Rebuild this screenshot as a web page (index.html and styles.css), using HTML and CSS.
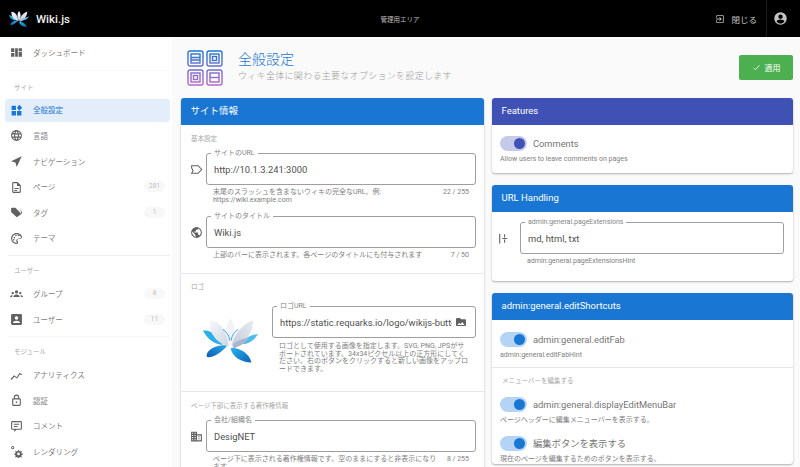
FILE: index.html
```html
<!DOCTYPE html>
<html lang="ja">
<head>
<meta charset="utf-8">
<title>全般設定 - Wiki.js</title>
<link rel="stylesheet" href="styles.css">
</head>
<body>
<svg class="defs" width="0" height="0" aria-hidden="true">
  <defs>
    <linearGradient id="lb" x1="0" y1="0" x2="1" y2="1"><stop offset="0" stop-color="#25b4ee"/><stop offset="1" stop-color="#0b62b8"/></linearGradient>
    <linearGradient id="lb2" x1="1" y1="0" x2="0" y2="1"><stop offset="0" stop-color="#29a9e8"/><stop offset="1" stop-color="#0d5fb3"/></linearGradient>
    <linearGradient id="pw" x1="0" y1="0" x2="1" y2="1"><stop offset="0" stop-color="#f6f7fa"/><stop offset="1" stop-color="#cfd6e2"/></linearGradient>
    <linearGradient id="pw2" x1="1" y1="0" x2="0" y2="1"><stop offset="0" stop-color="#e9ecf1"/><stop offset="1" stop-color="#c3ccdc"/></linearGradient>
    <linearGradient id="hg" gradientUnits="userSpaceOnUse" x1="0" y1="0" x2="0" y2="36"><stop offset="0" stop-color="#1976d2"/><stop offset="1" stop-color="#ba68c8"/></linearGradient>
    <symbol id="lotus" viewBox="0 0 100 80">
      <path fill="#29b0ea" d="M0 22C14 20 28 32 36 48C22 48 8 38 0 22Z"/>
      <path fill="#4bbcec" d="M100 28C88 30 74 36 66 46C80 48 92 42 100 28Z"/>
      <path fill="url(#lb2)" d="M44 49C34 62 18 72 7 70C4 58 24 47 44 49Z"/>
      <path fill="url(#lb)" d="M50 54C64 52 84 62 88 80C70 80 54 70 50 54Z"/>
      <path fill="url(#pw)" d="M12 4C28 2 44 22 47 50C30 48 10 30 12 4Z"/>
      <path fill="url(#pw2)" d="M91 3C76 8 58 24 52 48C70 50 92 30 91 3Z"/>
      <path fill="#a9b5cf" d="M54 48C64 38 76 36 84 34C78 44 66 52 54 54Z"/>
      <path fill="#f1f3f7" d="M50 0C60 12 61 32 50 50C40 32 40 12 50 0Z"/>
      <path fill="none" stroke="#3fa3e0" stroke-width="1.800" d="M36 20C43 24 47 30 49 40M64 20C57 24 53 30 51 40"/>
    </symbol>
    <symbol id="i-dash" viewBox="0 0 24 24"><path d="M2 4h6v7H2zM2 13h6v7H2zM9.500 4h5v16h-5zM16 4h6v5h-6zM16 10.500h6V20h-6z"/></symbol>
    <symbol id="i-grid" viewBox="0 0 24 24"><path d="M3 3h8v8H3zM13 13h8v8h-8zM3 13h8v8H3zM17 1.500L22.500 7 17 12.500 13 7z"/></symbol>
    <symbol id="i-web" viewBox="0 0 24 24"><path d="M16.360 14C16.440 13.340 16.500 12.680 16.500 12C16.500 11.320 16.440 10.660 16.360 10H19.740C19.900 10.640 20 11.310 20 12C20 12.690 19.900 13.360 19.740 14M14.590 19.560C15.190 18.450 15.650 17.250 15.970 16H18.920C17.960 17.650 16.430 18.930 14.590 19.560M14.340 14H9.660C9.560 13.340 9.500 12.680 9.500 12C9.500 11.320 9.560 10.650 9.660 10H14.340C14.430 10.650 14.500 11.320 14.500 12C14.500 12.680 14.430 13.340 14.340 14M12 19.960C11.170 18.760 10.500 17.430 10.090 16H13.910C13.500 17.430 12.830 18.760 12 19.960M8 8H5.080C6.030 6.340 7.570 5.060 9.400 4.440C8.800 5.550 8.350 6.750 8 8M5.080 16H8C8.350 17.250 8.800 18.450 9.400 19.560C7.570 18.930 6.030 17.650 5.080 16M4.260 14C4.100 13.360 4 12.690 4 12C4 11.310 4.100 10.640 4.260 10H7.640C7.560 10.660 7.500 11.320 7.500 12C7.500 12.680 7.560 13.340 7.640 14M12 4.030C12.830 5.230 13.500 6.570 13.910 8H10.090C10.500 6.570 11.170 5.230 12 4.030M18.920 8H15.970C15.650 6.750 15.190 5.550 14.590 4.440C16.430 5.070 17.960 6.340 18.920 8M12 2C6.470 2 2 6.500 2 12A10 10 0 0 0 12 22A10 10 0 0 0 22 12A10 10 0 0 0 12 2Z"/></symbol>
    <symbol id="i-nav" viewBox="0 0 24 24"><path d="M21.500 2.500L2 11.500 10 14 12.500 22z"/></symbol>
    <symbol id="i-page" viewBox="0 0 24 24"><path d="M14 2H6a2 2 0 0 0-2 2v16a2 2 0 0 0 2 2h12a2 2 0 0 0 2-2V8zM18 20H6V4h7v5h5zM8 13h8v1.800H8zM8 16.500h5v1.800H8z"/></symbol>
    <symbol id="i-tag" viewBox="0 0 24 24"><path d="M2 5a2 2 0 0 1 2-2h6l9 9.500a1.800 1.800 0 0 1 0 2.500l-5 5a1.800 1.800 0 0 1-2.500 0L2 11zM19 4.500l3.500 8.500-6 6 1-2 3-4z"/></symbol>
    <symbol id="i-palette" viewBox="0 0 24 24"><path d="M12 2C6.500 2 2 6.500 2 12s4.500 10 10 10c1.700 0 3-1.300 3-2.800 0-.7-.3-1.400-.8-1.900-.4-.5-.7-1-.7-1.700 0-1.400 1.100-2.500 2.500-2.500H18c2.200 0 4-1.800 4-4C22 5.600 17.500 2 12 2zM12 20c-4.400 0-8-3.600-8-8s3.600-8 8-8 8 3 8 6.100c0 1.100-.9 1.900-2 1.900h-2c-2.500 0-4.500 2-4.500 4.500 0 1.100.4 2.100 1.100 2.900.3.300.4.500.4.700 0 .4-.4.800-1 .8zM6.500 10.500a1.500 1.500 0 1 0 3 0 1.500 1.500 0 1 0-3 0zM9.500 6.500a1.500 1.500 0 1 0 3 0 1.500 1.500 0 1 0-3 0zM14.500 6.500a1.500 1.500 0 1 0 3 0 1.500 1.500 0 1 0-3 0zM5.500 14.500a1.500 1.500 0 1 0 3 0 1.500 1.500 0 1 0-3 0z"/></symbol>
    <symbol id="i-group" viewBox="0 0 24 24"><path d="M12 6a3 3 0 1 1 0 6 3 3 0 0 1 0-6zM5 9a2.200 2.200 0 1 1 0 4.400A2.200 2.200 0 0 1 5 9zM19 9a2.200 2.200 0 1 1 0 4.400A2.200 2.200 0 0 1 19 9zM6 18.500c0-2.500 3-4.500 6-4.500s6 2 6 4.500zM0 18.500c0-2 2-3.500 4.800-3.800-.8.900-1 2.400-1 3.800zM24 18.500c0-2-2-3.500-4.800-3.800.8.900 1 2.400 1 3.800z"/></symbol>
    <symbol id="i-user" viewBox="0 0 24 24"><path fill-rule="evenodd" d="M4 2h16a2 2 0 0 1 2 2v16a2 2 0 0 1-2 2H4a2 2 0 0 1-2-2V4a2 2 0 0 1 2-2zM12 6a3.300 3.300 0 1 0 0 6.600A3.300 3.300 0 0 0 12 6zM5.500 18.500h13c0-2.700-3.500-4.200-6.500-4.200s-6.500 1.500-6.500 4.200z"/></symbol>
    <symbol id="i-chart" viewBox="0 0 24 24"><path d="M1 18.500l6.500-7 5 3.500 5-8 5 3-1 1.700-3.300-2-5 8-5.200-3.600-5.500 6z"/></symbol>
    <symbol id="i-lock" viewBox="0 0 24 24"><path d="M18 8h-1V6a5 5 0 0 0-10 0v2H6a2 2 0 0 0-2 2v10a2 2 0 0 0 2 2h12a2 2 0 0 0 2-2V10a2 2 0 0 0-2-2zM9 6a3 3 0 0 1 6 0v2H9zM18 20H6V10h12zM12 13.500a1.500 1.500 0 1 0 0 3 1.500 1.500 0 0 0 0-3z"/></symbol>
    <symbol id="i-comment" viewBox="0 0 24 24"><path d="M4 2h16a2 2 0 0 1 2 2v12a2 2 0 0 1-2 2h-8l-4 4v-4H4a2 2 0 0 1-2-2V4a2 2 0 0 1 2-2zM4 4v12h16V4zM7 7h10v1.700H7zM7 11h7v1.700H7z"/></symbol>
    <symbol id="i-gears" viewBox="0 0 24 24"><path d="M5 2a3 3 0 1 1 0 6 3 3 0 0 1 0-6zM5 3.500a1.500 1.500 0 1 0 0 3 1.500 1.500 0 0 0 0-3zM15 9l1.500 0 .5 2 2 .8 1.800-1 1.100 1.100-1 1.800.8 2 2 .5 0 1.600-2 .5-.8 2 1 1.800-1.100 1.100-1.800-1-2 .8-.5 2h-1.600l-.5-2-2-.8-1.800 1-1.100-1.100 1-1.800-.8-2-2-.5v-1.600l2-.5.8-2-1-1.800 1.100-1.100 1.800 1 2-.8zM15.700 14a2.500 2.500 0 1 0 0 5 2.500 2.500 0 0 0 0-5z"/></symbol>
    <symbol id="i-exit" viewBox="0 0 24 24"><path d="M5 3h14a2 2 0 0 1 2 2v14a2 2 0 0 1-2 2H5a2 2 0 0 1-2-2v-4h2v4h14V5H5v4H3V5a2 2 0 0 1 2-2zM10.100 15.600L12.700 13H3v-2h9.700l-2.600-2.600L11.500 7l5 5-5 5z"/></symbol>
    <symbol id="i-account" viewBox="0 0 24 24"><path d="M12 2a10 10 0 1 0 0 20 10 10 0 0 0 0-20zM12 5.500a3.500 3.500 0 1 1 0 7 3.500 3.500 0 0 1 0-7zM12 20c-2.600 0-4.900-1.300-6.300-3.300C5.800 14.700 9.800 13.600 12 13.600s6.200 1.100 6.300 3.100C16.900 18.700 14.600 20 12 20z"/></symbol>
    <symbol id="i-label" viewBox="0 0 24 24"><path d="M3 5h12l6.500 7-6.500 7H3l1-1.800 1.500-3.200-1-2-1.500-3z" fill="none" stroke="currentColor" stroke-width="2"/></symbol>
    <symbol id="i-earth" viewBox="0 0 24 24"><path d="M12 2a10 10 0 1 0 0 20 10 10 0 0 0 0-20zM11 19.900C7 19.400 4 16 4 12c0-.6.100-1.200.2-1.800L9 15v1a2 2 0 0 0 2 2zM17.900 17.400c-.3-.8-1-1.400-1.900-1.400h-1v-3a1 1 0 0 0-1-1H8v-2h2a1 1 0 0 0 1-1V7h2a2 2 0 0 0 2-2v-.4c2.900 1.200 5 4.100 5 7.400 0 2.100-.8 4-2.100 5.400z"/></symbol>
    <symbol id="i-folder" viewBox="0 0 24 24"><path d="M4 4h6l2 2.500h8a2 2 0 0 1 2 2V18a2 2 0 0 1-2 2H4a2 2 0 0 1-2-2V6a2 2 0 0 1 2-2zM5 18h14l-4.500-6-3.500 4.500-2.500-3z" fill-rule="evenodd"/></symbol>
    <symbol id="i-building" viewBox="0 0 24 24"><path d="M2 3h11v5h9v13H2zM4 5v2h2V5zM8.500 5v2h2V5zM4 9v2h2V9zM8.500 9v2h2V9zM4 13v2h2v-2zM8.500 13v2h2v-2zM4 17v2h2v-2zM8.500 17v2h2v-2zM13 10v9h7v-9zM15 12h3v1.500h-3zM15 15.500h3V17h-3z" fill-rule="evenodd"/></symbol>
    <symbol id="i-ext" viewBox="0 0 24 24"><path d="M4 3h2v18H4zM13 4h2v6h-2zM10 11.200h9v1.600h-9zM13 14h2v6h-2z"/></symbol>
  </defs>
</svg>

<header class="topbar">
  <div class="brand">
    <svg class="brand-logo"><use href="#lotus"/></svg>
    <span class="brand-name">Wiki.js</span>
  </div>
  <div class="topbar-title">管理用エリア</div>
  <div class="topbar-actions">
    <svg class="exit-icon"><use href="#i-exit"/></svg>
    <span class="close-text">閉じる</span>
    <span class="topbar-sep"></span>
    <svg class="account-icon"><use href="#i-account"/></svg>
  </div>
</header>

<div class="shell">
  <nav class="sidebar">
    <a class="nav-item"><svg class="nav-icon"><use href="#i-dash"/></svg><span>ダッシュボード</span></a>
    <div class="nav-divider nav-divider-first"></div>
    <div class="nav-head">サイト</div>
    <a class="nav-item is-active"><svg class="nav-icon"><use href="#i-grid"/></svg><span>全般設定</span></a>
    <a class="nav-item"><svg class="nav-icon"><use href="#i-web"/></svg><span>言語</span></a>
    <a class="nav-item"><svg class="nav-icon"><use href="#i-nav"/></svg><span>ナビゲーション</span></a>
    <a class="nav-item"><svg class="nav-icon"><use href="#i-page"/></svg><span>ページ</span><b class="chip">281</b></a>
    <a class="nav-item"><svg class="nav-icon"><use href="#i-tag"/></svg><span>タグ</span><b class="chip">1</b></a>
    <a class="nav-item"><svg class="nav-icon"><use href="#i-palette"/></svg><span>テーマ</span></a>
    <div class="nav-divider"></div>
    <div class="nav-head">ユーザー</div>
    <a class="nav-item"><svg class="nav-icon"><use href="#i-group"/></svg><span>グループ</span><b class="chip">8</b></a>
    <a class="nav-item"><svg class="nav-icon"><use href="#i-user"/></svg><span>ユーザー</span><b class="chip">11</b></a>
    <div class="nav-divider nav-divider-faint"></div>
    <div class="nav-head">モジュール</div>
    <a class="nav-item"><svg class="nav-icon"><use href="#i-chart"/></svg><span>アナリティクス</span></a>
    <a class="nav-item"><svg class="nav-icon"><use href="#i-lock"/></svg><span>認証</span></a>
    <a class="nav-item"><svg class="nav-icon"><use href="#i-comment"/></svg><span>コメント</span></a>
    <a class="nav-item"><svg class="nav-icon"><use href="#i-gears"/></svg><span>レンダリング</span></a>
  </nav>

  <main class="content">
    <div class="page-head">
      <svg class="page-icon" viewBox="0 0 36 36">
        <rect x="1" y="1" width="15" height="15" rx="2"/><rect x="4" y="4" width="9" height="9"/><path d="M4 7.500h9M4 10h9"/>
        <rect x="20" y="1" width="15" height="15" rx="2"/><rect x="23" y="4" width="9" height="9"/><rect x="25.500" y="6.500" width="4" height="4"/>
        <rect x="1" y="20" width="15" height="15" rx="2"/><rect x="4" y="23" width="9" height="9"/><rect x="6.500" y="25.500" width="4" height="4"/>
        <rect x="20" y="20" width="15" height="15" rx="2"/><rect x="23" y="23" width="9" height="9"/><path d="M23 27.500h9"/>
      </svg>
      <div class="page-titles">
        <h1>全般設定</h1>
        <p>ウィキ全体に関わる主要なオプションを設定します</p>
      </div>
      <button class="apply"><svg class="apply-check" viewBox="0 0 24 24"><path d="M4 13l5 5L20 6" fill="none" stroke="#fff" stroke-width="2"/></svg>適用</button>
    </div>

    <div class="columns">
      <section class="card card-left">
        <h2 class="card-title">サイト情報</h2>
        <div class="block block-basic">
          <div class="subhead">基本設定</div>
          <div class="field-row">
            <svg class="field-icon"><use href="#i-label"/></svg>
            <div class="field">
              <div class="box"><span class="box-label">サイトのURL</span><span class="box-value">http://10.1.3.241:3000</span></div>
              <div class="hint-row"><span class="hint hint-url">末尾のスラッシュを含まないウィキの完全なURL。例: https://wiki.example.com</span><span class="count">22 / 255</span></div>
            </div>
          </div>
          <div class="field-row">
            <svg class="field-icon"><use href="#i-earth"/></svg>
            <div class="field">
              <div class="box"><span class="box-label">サイトのタイトル</span><span class="box-value">Wiki.js</span></div>
              <div class="hint-row"><span class="hint">上部のバーに表示されます。各ページのタイトルにも付与されます</span><span class="count">7 / 50</span></div>
            </div>
          </div>
        </div>
        <div class="block block-logo">
          <div class="subhead">ロゴ</div>
          <div class="logo-row">
            <svg class="logo-big"><use href="#lotus"/></svg>
            <div class="field logo-field">
              <div class="box"><span class="box-label">ロゴURL</span><span class="box-value box-value-clip">https://static.requarks.io/logo/wikijs-butterfly.svg</span><svg class="folder"><use href="#i-folder"/></svg></div>
              <div class="hint-row"><span class="hint hint-logo">ロゴとして使用する画像を指定します。SVG, PNG, JPSがサポートされています。34x34ピクセル以上の正方形にしてください。右のボタンをクリックすると新しい画像をアップロードできます。</span></div>
            </div>
          </div>
        </div>
        <div class="block block-company">
          <div class="subhead">ページ下部に表示する著作権情報</div>
          <div class="field-row">
            <svg class="field-icon"><use href="#i-building"/></svg>
            <div class="field">
              <div class="box"><span class="box-label">会社/組織名</span><span class="box-value">DesigNET</span></div>
              <div class="hint-row"><span class="hint hint-company">ページ下に表示される著作権情報です。空のままにすると非表示になります。</span><span class="count">8 / 255</span></div>
            </div>
          </div>
        </div>
      </section>

      <div class="stack">
        <section class="card card-features">
          <h2 class="card-title card-title-indigo">Features</h2>
          <div class="toggle-block">
            <div class="toggle toggle-indigo"><span class="track"><i class="thumb"></i></span><span class="toggle-label">Comments</span></div>
            <div class="toggle-hint">Allow users to leave comments on pages</div>
          </div>
        </section>
        <section class="card card-url">
          <h2 class="card-title">URL Handling</h2>
          <div class="url-block">
            <div class="field-row">
              <svg class="field-icon field-icon-ext"><use href="#i-ext"/></svg>
              <div class="field">
                <div class="box"><span class="box-label">admin:general.pageExtensions</span><span class="box-value">md, html, txt</span></div>
                <div class="hint-row"><span class="hint">admin:general.pageExtensionsHint</span></div>
              </div>
            </div>
          </div>
        </section>
        <section class="card card-shortcuts">
          <h2 class="card-title">admin:general.editShortcuts</h2>
          <div class="toggle-block toggle-block-line">
            <div class="toggle"><span class="track"><i class="thumb"></i></span><span class="toggle-label">admin:general.editFab</span></div>
            <div class="toggle-hint">admin:general.editFabHint</div>
          </div>
          <div class="toggle-block toggle-block-menu">
            <div class="subhead">メニューバーを編集する</div>
            <div class="toggle"><span class="track"><i class="thumb"></i></span><span class="toggle-label">admin:general.displayEditMenuBar</span></div>
            <div class="toggle-hint">ページヘッダーに編集メニューバーを表示する。</div>
            <div class="toggle toggle-next"><span class="track"><i class="thumb"></i></span><span class="toggle-label">編集ボタンを表示する</span></div>
            <div class="toggle-hint">現在のページを編集するためのボタンを表示する。</div>
          </div>
        </section>
      </div>
    </div>
  </main>
</div>
</body>
</html>
```

FILE: styles.css
```css
* { box-sizing: border-box; }
html, body { margin: 0; height: 100%; overflow: hidden; }
body {
  background: #fafafa;
  color: #616161;
  font-family: Roboto, "Noto Sans CJK JP", sans-serif;
  font-size: 9px;
}
.defs { position: absolute; }
svg { display: block; flex: none; fill: currentColor; }

.topbar {
  height: 37px;
  background: #000;
  color: #e0e0e0;
  display: grid;
  grid-template-columns: 1fr auto 1fr;
  align-items: center;
}
.brand { display: flex; align-items: center; padding-left: 9px; }
.brand-logo { width: 20px; height: 16px; }
.brand-name { margin-left: 7px; font-size: 11.500px; font-weight: 500; color: #eee; }
.topbar-title { font-size: 6.500px; color: #bdbdbd; }
.topbar-actions { display: flex; align-items: center; justify-content: flex-end; height: 37px; }
.exit-icon { width: 10px; height: 10px; color: #bdbdbd; }
.close-text { margin-left: 6px; font-size: 8.500px; color: #c4c4c4; }
.topbar-sep { width: 1px; height: 37px; background: #1c1c1c; margin-left: 9px; }
.account-icon { width: 15px; height: 15px; margin: 0 12px 0 6px; color: #c4c4c4; }

.shell { display: flex; height: 430px; }

.sidebar {
  width: 172px;
  flex: none;
  background: #fff;
  padding: 3.200px 0 0;
}
.nav-item {
  height: 25.600px;
  display: flex;
  align-items: center;
  padding: 0 7px 1px 10px;
  font-size: 7.500px;
  color: #808080;
}
.nav-item span { margin-left: 10px; }
.nav-icon { width: 13px; height: 13px; color: #616161; margin-top: 1px; }
.nav-item.is-active {
  height: 23.600px;
  margin: 1px 2px 1px 5px;
  padding-left: 5px;
  background: #e3eefa;
  border-radius: 3px;
  color: #1976d2;
}
.nav-item.is-active .nav-icon { color: #1976d2; }
.chip {
  margin-left: auto;
  min-width: 21px;
  height: 11px;
  padding: 0 5px;
  border-radius: 6px;
  background: #f8f8f8;
  color: #bdbdbd;
  font-size: 6.500px;
  font-weight: 400;
  line-height: 11px;
  text-align: center;
}
.nav-divider { height: 1px; margin: 4px 2px 5px 8px; background: #eee; }
.nav-divider-first { background: #f8f8f8; margin-bottom: 6.800px; }
.nav-divider-faint { background: #f8f8f8; }
.nav-head {
  height: 20px;
  padding-left: 14px;
  line-height: 20px;
  font-size: 6.500px;
  color: #a8a8a8;
}

.content { flex: 1; min-width: 0; padding: 0 7px 0 9px; }
.page-head { height: 61px; display: flex; align-items: flex-start; padding-top: 13px; }
.page-icon { width: 36px; height: 36px; margin-left: 6px; fill: none; stroke: url(#hg); stroke-width: 1.400; }
.page-titles { margin-left: 15px; flex: 1; }
.page-titles h1 { margin: 0 0 1px; font-size: 14px; line-height: 19px; font-weight: 300; color: #1976d2; }
.page-titles p { margin: 0; font-size: 9px; line-height: 13px; font-weight: 300; color: #9e9e9e; letter-spacing: .3px; }
.apply {
  width: 54px;
  height: 25px;
  margin-top: 5px;
  display: flex;
  align-items: center;
  justify-content: center;
  gap: 4px;
  border: 0;
  border-radius: 2px;
  background: #4caf50;
  color: #fff;
  font: inherit;
  font-size: 8px;
}
.apply-check { width: 9px; height: 9px; }

.columns { display: grid; grid-template-columns: 303px 301px; gap: 8px; align-items: start; }
.stack { display: flex; flex-direction: column; gap: 12px; }

.card {
  background: #fff;
  border-radius: 3px;
  box-shadow: 0 1px 2px rgba(0,0,0,.3);
  overflow: hidden;
}
.card-title {
  margin: 0;
  height: 27px;
  padding-left: 9.500px;
  background: #1976d2;
  color: #fff;
  font-size: 9.500px;
  font-weight: 400;
  line-height: 26px;
}
.card-title-indigo { background: #3f51b5; }

.subhead { font-size: 6.500px; line-height: 9px; color: #a8a8a8; }
.block { padding: 10px 8px 0 10px; border-bottom: 1px solid #e8e8e8; }
.block-basic { height: 149px; }
.block-logo { height: 118px; padding-top: 9px; }
.block-company { border-bottom: 0; }

.field-row { display: flex; align-items: flex-start; }
.field-icon { width: 13px; height: 13px; margin-top: 10px; margin-right: 3px; color: #616161; }
.block .field-row { margin-left: -1px; }
.block .subhead + .field-row { margin-top: 9px; }
.field { flex: 1; min-width: 0; }

.box {
  position: relative;
  height: 32px;
  display: flex;
  align-items: center;
  padding: 0 7px;
  border: 1px solid #9e9e9e;
  border-radius: 3px;
  background: #fff;
}
.box-label {
  position: absolute;
  top: -5px;
  left: 4px;
  padding: 0 3px;
  background: #fff;
  font-size: 7px;
  line-height: 9px;
  color: #858585;
}
.box-value { font-size: 9.400px; color: #505050; white-space: nowrap; }
.box-value-clip { flex: 1; min-width: 0; overflow: hidden; }
.folder { width: 12px; height: 12px; margin-left: 3px; margin-right: 1px; color: #616161; }

.hint-row { display: flex; justify-content: space-between; gap: 8px; padding: 4px 7px 0; min-height: 31px; }
.hint { font-size: 7px; line-height: 7.500px; color: #808080; }
.hint-url { width: 175px; }
.hint-company { width: 225px; }
.hint-logo { width: 190px; padding-top: 1px; }
.count { flex: none; font-size: 7px; line-height: 7.500px; color: #808080; }

.logo-row { display: flex; align-items: flex-start; margin-top: 14px; }
.logo-big { width: 55px; height: 45px; margin: 12px 14px 0 12px; }
.logo-field .hint-row { padding-right: 5px; }

.track {
  position: relative;
  display: block;
  width: 27px;
  height: 15px;
  border-radius: 8px;
  background: #b3d4f5;
}
.thumb {
  position: absolute;
  top: 2px;
  right: 2px;
  width: 11px;
  height: 11px;
  border-radius: 50%;
  background: #1976d2;
}
.toggle { display: flex; align-items: center; gap: 6px; height: 16px; }
.toggle-indigo .track { background: #c5cae9; }
.toggle-indigo .thumb { background: #3f51b5; }
.toggle-label { font-size: 9.300px; color: #757575; }
.toggle-next { margin-top: 10px; }
.toggle-hint { margin-top: 4px; font-size: 7px; line-height: 9px; color: #808080; }

.toggle-block { padding: 10px 8px 0; }
.card-features { height: 75px; }
.card-url { height: 96px; }
.url-block { padding: 10px 9px 0 5px; }
.url-block .field-icon { margin-right: 10px; }
.url-block .hint-row { min-height: 0; }
.toggle-block-line { height: 48px; padding-top: 11px; border-bottom: 1px solid #e8e8e8; }
.toggle-block-menu { padding-top: 9px; }
.toggle-block-menu .subhead { margin-bottom: 10px; padding-left: 2px; }
```
